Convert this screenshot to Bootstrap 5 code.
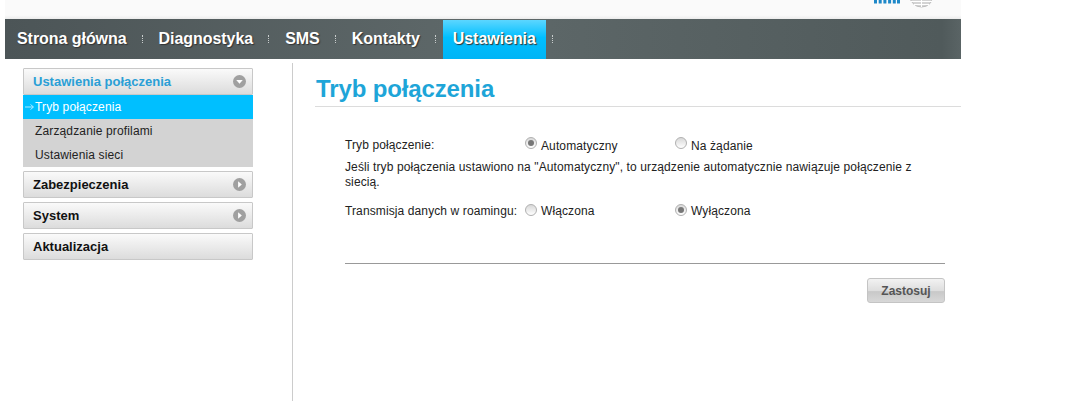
<!doctype html>
<html lang="pl">
<head>
    <meta charset="utf-8">
    <meta name="viewport" content="width=device-width, initial-scale=1">
    <title>Tryb połączenia</title>
    <link href="https://cdn.jsdelivr.net/npm/bootstrap@5.3.3/dist/css/bootstrap.min.css" rel="stylesheet">
    <style>
        html, body {
            height: 401px;
            overflow: hidden;
        }
        body {
            background: #fff;
            font-family: "Liberation Sans", Arial, sans-serif;
            font-size: 12px;
            color: #222;
        }
        .page-wrap {
            width: 956px;
            margin-left: 5px;
        }
        .top-strip {
            height: 19px;
            background: linear-gradient(#fafafa, #fafafa 80%, #ececec);
            padding-right: 29px;
        }
        .main-nav {
            height: 40px;
            padding-left: 12px;
            background: linear-gradient(90deg, #4c5557, #5e6869 50%, #505a5b 98%, #5a6465);
        }
        .main-nav a {
            color: #fff;
            font-size: 16px;
            font-weight: 700;
            text-decoration: none;
            text-shadow: 1px 1px 1px #333;
            letter-spacing: -.05px;
        }
        .nav-item-link {
            line-height: 40px;
        }
        .nav-sep {
            width: 2px;
            height: 8px;
            margin: 0 15px;
            border-left: 1px dotted #c9cdcd;
        }
        .main-nav a.nav-current {
            height: 39px;
            margin: 1px -9px 0 -9px;
            line-height: 38px;
            padding: 0 10px;
            background: linear-gradient(#5cd6ff, #00bfff 45%, #00b4f5);
        }
        .body-row {
            height: 342px;
        }
        .side-col {
            width: 288px;
            padding: 5px 0 0 18px;
            border-right: 1px solid #ccc;
            margin-top: 4px;
            flex-shrink: 0;
        }
        .side-list {
            width: 230px;
        }
        .side-head {
            height: 27px;
            border: 1px solid #c8c8c8;
            border-radius: 1px;
            background: linear-gradient(#fafafa, #dcdcdc);
            font-size: 13px;
            font-weight: 700;
            color: #111;
            padding: 0 6px 0 9px;
            margin-bottom: 4px;
        }
        .side-head.side-open {
            color: #2a9fd6;
            margin-bottom: 0;
        }
        .side-sub {
            background: #d3d3d3;
            margin-bottom: 4px;
        }
        .side-sub a {
            display: block;
            height: 24px;
            line-height: 24px;
            padding-left: 12px;
            color: #222;
            text-decoration: none;
            letter-spacing: .14px;
        }
        .side-sub a.sub-current {
            background: #00bfff;
            color: #fff;
            padding-left: 2px;
        }
        .content-col {
            padding: 0 0 0 22px;
            flex-grow: 1;
        }
        .page-title {
            height: 47px;
            margin: 0;
            font-family: "Liberation Sans", Arial, sans-serif;
            font-size: 24px;
            font-weight: 700;
            line-height: 60px;
            color: #1ea5d8;
            border-bottom: 1px solid #dcdcdc;
            padding-left: 1px;
            box-sizing: content-box;
            letter-spacing: -.13px;
        }
        .form-area {
            width: 600px;
            margin-left: 30px;
            padding-top: 28px;
            letter-spacing: .11px;
        }
        .opt-row {
            height: 20px;
        }
        .opt-label {
            width: 180px;
        }
        .opt-val {
            width: 150px;
        }
        .row-first .opt-val {
            padding-top: 2px;
        }
        .row-first .fake-radio {
            top: -3px;
        }
        .hint-text {
            margin: 5px 0 11px;
            line-height: 15px;
        }
        .fake-radio {
            width: 12px;
            height: 12px;
            border-radius: 50%;
            border: 1px solid #b0b0b0;
            background: linear-gradient(#d8d8d8, #fff);
            margin-right: 4px;
            position: relative;
            top: -1px;
            flex-shrink: 0;
        }
        .fake-radio.radio-on::after {
            content: "";
            display: block;
            width: 6px;
            height: 6px;
            margin: 2px;
            border-radius: 50%;
            background: #777;
        }
        .form-rule {
            margin: 42px 0 14px;
            border: 0;
            border-top: 1px solid #999;
            opacity: 1;
        }
        .apply-btn {
            width: 78px;
            height: 25px;
            padding: 0;
            border: 1px solid #c4c4c4;
            border-radius: 3px;
            background: linear-gradient(#f2f2f2, #dedede 50%, #c8c8c8 55%, #d8d8d8);
            color: #555;
            font-size: 12px;
            font-weight: 700;
        }
    </style>
</head>
<body>
    <div class="page-wrap">
        <div class="top-strip d-flex justify-content-end align-items-start overflow-hidden">
            <svg width="60" height="8" viewBox="0 0 60 8" aria-hidden="true">
                <path d="M3.500 0v3.500M8.200 0v3.500M12.900 0v3.500M17.600 0v3.500M22.300 0v3.500M26.500 0v3.500" stroke="#1e88c8" stroke-width="3"/>
                <circle cx="49.500" cy="-5" r="12" fill="#d4d4d4" stroke="#bdbdbd"/>
                <path d="M49.500 -6v13M39 1.500h21M42 4.500h15" stroke="#fff" stroke-width="1" fill="none"/>
            </svg>
        </div>
        <nav class="main-nav d-flex align-items-center">
            <a class="nav-item-link" href="#">Strona główna</a><span class="nav-sep"></span>
            <a class="nav-item-link" href="#">Diagnostyka</a><span class="nav-sep"></span>
            <a class="nav-item-link" href="#">SMS</a><span class="nav-sep"></span>
            <a class="nav-item-link" href="#">Kontakty</a><span class="nav-sep"></span>
            <a class="nav-current" href="#">Ustawienia</a><span class="nav-sep"></span>
        </nav>
        <div class="body-row d-flex">
            <div class="side-col">
                <div class="side-list">
                    <div class="side-head side-open d-flex align-items-center justify-content-between">
                        Ustawienia połączenia
                        <svg width="13" height="13" viewBox="0 0 14 14" aria-hidden="true"><circle cx="7" cy="7" r="7" fill="#a0a0a0"/><path d="M3.500 5.500h7L7 9.500z" fill="#fff"/></svg>
                    </div>
                    <div class="side-sub">
                        <a class="sub-current d-flex align-items-center" href="#">
                            <svg width="10" height="8" viewBox="0 0 10 8" aria-hidden="true"><path d="M0 4h8M5.500 1.500 8.500 4 5.500 6.500" fill="none" stroke="#d8f4ff" stroke-width=".8"/></svg>
                            Tryb połączenia
                        </a>
                        <a href="#">Zarządzanie profilami</a>
                        <a href="#">Ustawienia sieci</a>
                    </div>
                    <div class="side-head d-flex align-items-center justify-content-between">
                        Zabezpieczenia
                        <svg width="13" height="13" viewBox="0 0 14 14" aria-hidden="true"><circle cx="7" cy="7" r="7" fill="#a0a0a0"/><path d="M5.500 3.500v7l4-3.500z" fill="#fff"/></svg>
                    </div>
                    <div class="side-head d-flex align-items-center justify-content-between">
                        System
                        <svg width="13" height="13" viewBox="0 0 14 14" aria-hidden="true"><circle cx="7" cy="7" r="7" fill="#a0a0a0"/><path d="M5.500 3.500v7l4-3.500z" fill="#fff"/></svg>
                    </div>
                    <div class="side-head d-flex align-items-center">Aktualizacja</div>
                </div>
            </div>
            <div class="content-col">
                <h1 class="page-title">Tryb połączenia</h1>
                <div class="form-area">
                    <div class="opt-row row-first d-flex align-items-center">
                        <span class="opt-label">Tryb połączenie:</span>
                        <span class="opt-val d-flex align-items-center"><span class="fake-radio radio-on"></span>Automatyczny</span>
                        <span class="opt-val d-flex align-items-center"><span class="fake-radio"></span>Na żądanie</span>
                    </div>
                    <p class="hint-text">Jeśli tryb połączenia ustawiono na "Automatyczny", to urządzenie automatycznie nawiązuje połączenie z siecią.</p>
                    <div class="opt-row d-flex align-items-center">
                        <span class="opt-label">Transmisja danych w roamingu:</span>
                        <span class="opt-val d-flex align-items-center"><span class="fake-radio"></span>Włączona</span>
                        <span class="opt-val d-flex align-items-center"><span class="fake-radio radio-on"></span>Wyłączona</span>
                    </div>
                    <hr class="form-rule">
                    <div class="d-flex justify-content-end">
                        <button type="button" class="btn apply-btn">Zastosuj</button>
                    </div>
                </div>
            </div>
        </div>
    </div>
    <script src="https://cdn.jsdelivr.net/npm/bootstrap@5.3.3/dist/js/bootstrap.bundle.min.js"></script>
</body>
</html>
